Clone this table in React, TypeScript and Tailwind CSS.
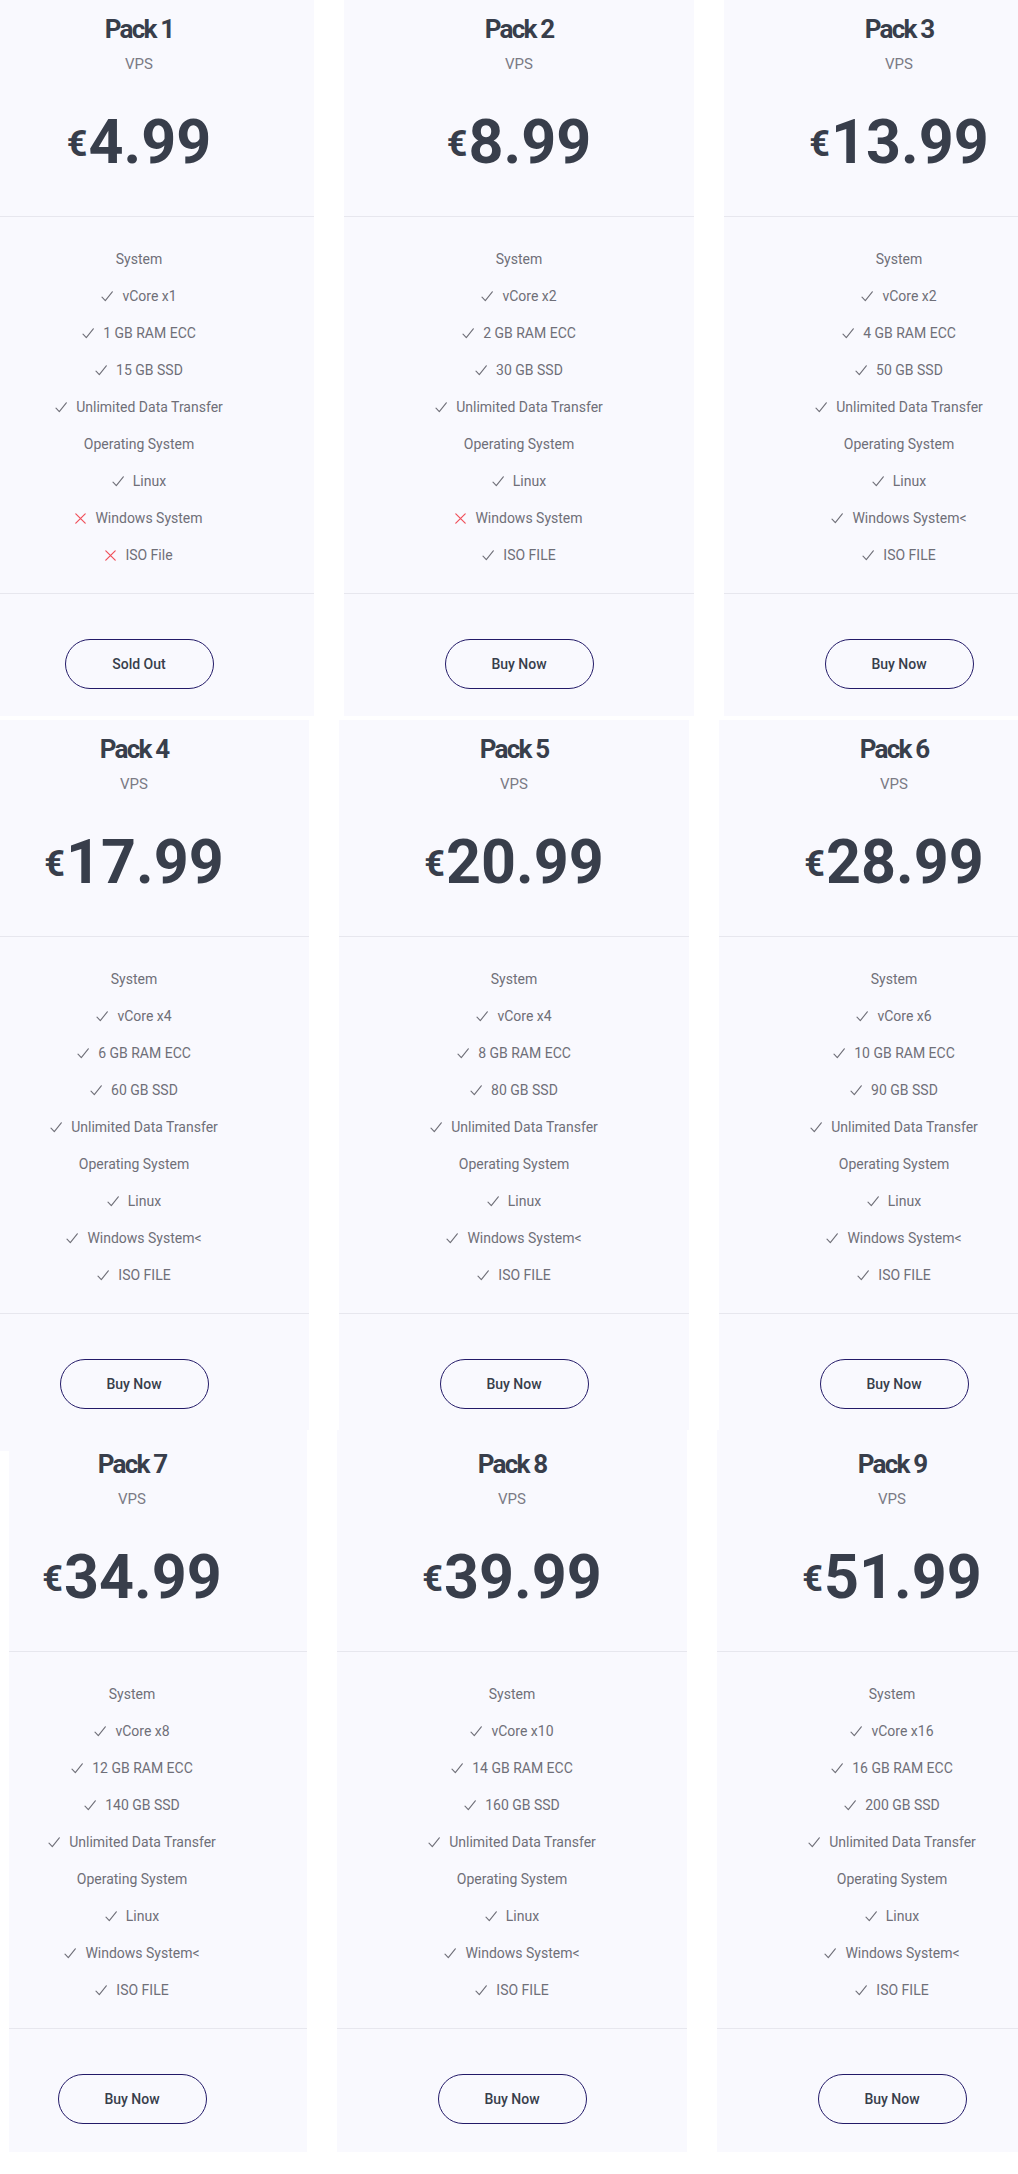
import React from "react";

type Feat = { t: string; kind: "head" | "ok" | "no" };

type Pack = {
  name: string;
  price: string;
  core: string;
  ram: string;
  ssd: string;
  win: "no" | "ok";
  iso: "no" | "ok";
  isoLabel: string;
  winLabel: string;
  btn: string;
};

const packs: Pack[] = [
  { name: "Pack 1", price: "4.99", core: "vCore x1", ram: "1 GB RAM ECC", ssd: "15 GB SSD", win: "no", iso: "no", isoLabel: "ISO File", winLabel: "Windows System", btn: "Sold Out" },
  { name: "Pack 2", price: "8.99", core: "vCore x2", ram: "2 GB RAM ECC", ssd: "30 GB SSD", win: "no", iso: "ok", isoLabel: "ISO FILE", winLabel: "Windows System", btn: "Buy Now" },
  { name: "Pack 3", price: "13.99", core: "vCore x2", ram: "4 GB RAM ECC", ssd: "50 GB SSD", win: "ok", iso: "ok", isoLabel: "ISO FILE", winLabel: "Windows System<", btn: "Buy Now" },
  { name: "Pack 4", price: "17.99", core: "vCore x4", ram: "6 GB RAM ECC", ssd: "60 GB SSD", win: "ok", iso: "ok", isoLabel: "ISO FILE", winLabel: "Windows System<", btn: "Buy Now" },
  { name: "Pack 5", price: "20.99", core: "vCore x4", ram: "8 GB RAM ECC", ssd: "80 GB SSD", win: "ok", iso: "ok", isoLabel: "ISO FILE", winLabel: "Windows System<", btn: "Buy Now" },
  { name: "Pack 6", price: "28.99", core: "vCore x6", ram: "10 GB RAM ECC", ssd: "90 GB SSD", win: "ok", iso: "ok", isoLabel: "ISO FILE", winLabel: "Windows System<", btn: "Buy Now" },
  { name: "Pack 7", price: "34.99", core: "vCore x8", ram: "12 GB RAM ECC", ssd: "140 GB SSD", win: "ok", iso: "ok", isoLabel: "ISO FILE", winLabel: "Windows System<", btn: "Buy Now" },
  { name: "Pack 8", price: "39.99", core: "vCore x10", ram: "14 GB RAM ECC", ssd: "160 GB SSD", win: "ok", iso: "ok", isoLabel: "ISO FILE", winLabel: "Windows System<", btn: "Buy Now" },
  { name: "Pack 9", price: "51.99", core: "vCore x16", ram: "16 GB RAM ECC", ssd: "200 GB SSD", win: "ok", iso: "ok", isoLabel: "ISO FILE", winLabel: "Windows System<", btn: "Buy Now" },
];

function CheckIcon() {
  return (
    <svg width="12" height="11" viewBox="0 0 12 11" className="shrink-0">
      <path d="M1 6.2 L4.3 9.6 L11.3 0.8" fill="none" stroke="#6f6f78" strokeWidth="1.1" strokeLinecap="round" strokeLinejoin="round" />
    </svg>
  );
}

function CrossIcon() {
  return (
    <svg width="11" height="11" viewBox="0 0 11 11" className="shrink-0">
      <path d="M0.8 0.8 L10.2 10.2 M10.2 0.8 L0.8 10.2" fill="none" stroke="#f0505a" strokeWidth="1.2" strokeLinecap="round" />
    </svg>
  );
}

function Card({ p, pt, pb }: { p: Pack; pt: string; pb: string }) {
  const feats: Feat[] = [
    { t: "System", kind: "head" },
    { t: p.core, kind: "ok" },
    { t: p.ram, kind: "ok" },
    { t: p.ssd, kind: "ok" },
    { t: "Unlimited Data Transfer", kind: "ok" },
    { t: "Operating System", kind: "head" },
    { t: "Linux", kind: "ok" },
    { t: p.winLabel, kind: p.win },
    { t: p.isoLabel, kind: p.iso },
  ];
  return (
    <div className={`w-[350px] shrink-0 bg-[#f9f9fe] flex flex-col ${pt} ${pb}`}>
      <div className="flex flex-col items-center pt-[13px] pb-[39px] border-b border-[#e7e7ee]">
        <div className="text-[26px] leading-[32px] font-bold tracking-[-1.8px] text-[#383e4b]">
          {p.name}
        </div>
        <div className="mt-[9px] text-[15px] leading-[20px] text-[#7b7b85]">VPS</div>
        <div className="mt-[33px] h-[70px] flex items-end text-[#383e4b]">
          <span className="text-[36px] leading-[40px] font-bold tracking-[-1px] mb-[13px] mr-[2px]">€</span>
          <span className="text-[61px] leading-[70px] font-bold">{p.price}</span>
        </div>
      </div>
      <div className="flex flex-col items-center pt-[24px] pb-[19px] border-b border-[#e7e7ee]">
        {feats.map((f, i) => (
          <div key={i} className="h-[37px] flex items-center gap-[9px] text-[14px] text-[#6f6f78]">
            {f.kind === "ok" && <CheckIcon />}
            {f.kind === "no" && <CrossIcon />}
            <span>{f.t}</span>
          </div>
        ))}
      </div>
      <div className="flex justify-center pt-[45px]">
        <button className="w-[149px] h-[50px] rounded-full border border-[#231a68] text-[14px] font-medium text-[#383e4b] flex items-center justify-center">
          {p.btn}
        </button>
      </div>
    </div>
  );
}

export default function App() {
  return (
    <div className="w-[1018px] h-[2174px] overflow-hidden bg-white" style={{ fontFamily: "Roboto, 'Liberation Sans', sans-serif" }}>
      <div className="flex gap-[30px] ml-[-36px]">
        {packs.slice(0, 3).map((p) => (
          <Card key={p.name} p={p} pt="pt-0" pb="pb-[27px]" />
        ))}
      </div>
      <div className="flex gap-[30px] ml-[-41px] mt-[4px]">
        {packs.slice(3, 6).map((p) => (
          <Card key={p.name} p={p} pt="pt-0" pb="pb-[21px]" />
        ))}
      </div>
      <div className="relative flex gap-[30px] ml-[-43px]">
        {packs.slice(6, 9).map((p) => (
          <Card key={p.name} p={p} pt="pt-[5px]" pb="pb-[28px]" />
        ))}
        <div className="absolute left-[43px] top-[21px] bottom-0 w-[9px] bg-white" />
      </div>
    </div>
  );
}
